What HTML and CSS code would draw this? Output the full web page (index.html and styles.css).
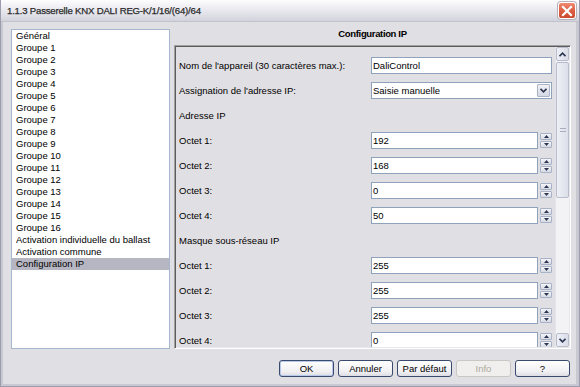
FILE: index.html
```html
<!DOCTYPE html>
<html lang="fr">
<head>
<meta charset="utf-8">
<title>Passerelle KNX DALI</title>
<link rel="stylesheet" href="styles.css">
</head>
<body>
<div class="window">
  <div class="titlebar">
    <span class="title">1.1.3 Passerelle KNX DALI REG-K/1/16/(64)/64</span>
    <span class="close"><svg width="12" height="12" viewBox="0 0 12 12"><path d="M2 2 L10 10 M10 2 L2 10" stroke="#fff" stroke-width="2.2" stroke-linecap="square"/></svg></span>
  </div>
  <div class="body">
    <div class="main">
      <ul class="tree">
        <li>Général</li>
        <li>Groupe 1</li>
        <li>Groupe 2</li>
        <li>Groupe 3</li>
        <li>Groupe 4</li>
        <li>Groupe 5</li>
        <li>Groupe 6</li>
        <li>Groupe 7</li>
        <li>Groupe 8</li>
        <li>Groupe 9</li>
        <li>Groupe 10</li>
        <li>Groupe 11</li>
        <li>Groupe 12</li>
        <li>Groupe 13</li>
        <li>Groupe 14</li>
        <li>Groupe 15</li>
        <li>Groupe 16</li>
        <li>Activation individuelle du ballast</li>
        <li>Activation commune</li>
        <li class="selected">Configuration IP</li>
      </ul>
      <div class="right">
        <div class="header">Configuration IP</div>
        <div class="panel">
          <div class="form">
            <div class="row"><span class="label">Nom de l'appareil (30 caractères max.):</span><span class="field">DaliControl</span></div>
            <div class="row"><span class="label">Assignation de l'adresse IP:</span><span class="field select"><span class="value">Saisie manuelle</span><span class="dropbtn"><svg width="7" height="5" viewBox="0 0 7 5"><path d="M0.5 0.8 L3.5 3.8 L6.5 0.8" fill="none" stroke="#2a3550" stroke-width="1.6"/></svg></span></span></div>
            <div class="row"><span class="label">Adresse IP</span></div>
            <div class="row"><span class="label">Octet 1:</span><span class="spin"><span class="field">192</span><span class="spinbtns"><span class="sb"><svg width="5" height="3" viewBox="0 0 5 3"><path d="M0 3 L2.5 0 L5 3Z" fill="#2a3550"/></svg></span><span class="sb"><svg width="5" height="3" viewBox="0 0 5 3"><path d="M0 0 L2.5 3 L5 0Z" fill="#2a3550"/></svg></span></span></span></div>
            <div class="row"><span class="label">Octet 2:</span><span class="spin"><span class="field">168</span><span class="spinbtns"><span class="sb"><svg width="5" height="3" viewBox="0 0 5 3"><path d="M0 3 L2.5 0 L5 3Z" fill="#2a3550"/></svg></span><span class="sb"><svg width="5" height="3" viewBox="0 0 5 3"><path d="M0 0 L2.5 3 L5 0Z" fill="#2a3550"/></svg></span></span></span></div>
            <div class="row"><span class="label">Octet 3:</span><span class="spin"><span class="field">0</span><span class="spinbtns"><span class="sb"><svg width="5" height="3" viewBox="0 0 5 3"><path d="M0 3 L2.5 0 L5 3Z" fill="#2a3550"/></svg></span><span class="sb"><svg width="5" height="3" viewBox="0 0 5 3"><path d="M0 0 L2.5 3 L5 0Z" fill="#2a3550"/></svg></span></span></span></div>
            <div class="row"><span class="label">Octet 4:</span><span class="spin"><span class="field">50</span><span class="spinbtns"><span class="sb"><svg width="5" height="3" viewBox="0 0 5 3"><path d="M0 3 L2.5 0 L5 3Z" fill="#2a3550"/></svg></span><span class="sb"><svg width="5" height="3" viewBox="0 0 5 3"><path d="M0 0 L2.5 3 L5 0Z" fill="#2a3550"/></svg></span></span></span></div>
            <div class="row"><span class="label">Masque sous-réseau IP</span></div>
            <div class="row"><span class="label">Octet 1:</span><span class="spin"><span class="field">255</span><span class="spinbtns"><span class="sb"><svg width="5" height="3" viewBox="0 0 5 3"><path d="M0 3 L2.5 0 L5 3Z" fill="#2a3550"/></svg></span><span class="sb"><svg width="5" height="3" viewBox="0 0 5 3"><path d="M0 0 L2.5 3 L5 0Z" fill="#2a3550"/></svg></span></span></span></div>
            <div class="row"><span class="label">Octet 2:</span><span class="spin"><span class="field">255</span><span class="spinbtns"><span class="sb"><svg width="5" height="3" viewBox="0 0 5 3"><path d="M0 3 L2.5 0 L5 3Z" fill="#2a3550"/></svg></span><span class="sb"><svg width="5" height="3" viewBox="0 0 5 3"><path d="M0 0 L2.5 3 L5 0Z" fill="#2a3550"/></svg></span></span></span></div>
            <div class="row"><span class="label">Octet 3:</span><span class="spin"><span class="field">255</span><span class="spinbtns"><span class="sb"><svg width="5" height="3" viewBox="0 0 5 3"><path d="M0 3 L2.5 0 L5 3Z" fill="#2a3550"/></svg></span><span class="sb"><svg width="5" height="3" viewBox="0 0 5 3"><path d="M0 0 L2.5 3 L5 0Z" fill="#2a3550"/></svg></span></span></span></div>
            <div class="row"><span class="label">Octet 4:</span><span class="spin"><span class="field">0</span><span class="spinbtns"><span class="sb"><svg width="5" height="3" viewBox="0 0 5 3"><path d="M0 3 L2.5 0 L5 3Z" fill="#2a3550"/></svg></span><span class="sb"><svg width="5" height="3" viewBox="0 0 5 3"><path d="M0 0 L2.5 3 L5 0Z" fill="#2a3550"/></svg></span></span></span></div>
          </div>
          <div class="scrollbar">
            <span class="sbtn"><svg width="7" height="5" viewBox="0 0 7 5"><path d="M0.5 4.2 L3.5 1.2 L6.5 4.2" fill="none" stroke="#2a3550" stroke-width="1.6"/></svg></span>
            <div class="track">
              <div class="thumb"><span class="grip"></span></div>
            </div>
            <span class="sbtn"><svg width="7" height="5" viewBox="0 0 7 5"><path d="M0.5 0.8 L3.5 3.8 L6.5 0.8" fill="none" stroke="#2a3550" stroke-width="1.6"/></svg></span>
          </div>
        </div>
      </div>
    </div>
    <div class="buttons">
      <span class="btn default">OK</span>
      <span class="btn">Annuler</span>
      <span class="btn">Par défaut</span>
      <span class="btn disabled">Info</span>
      <span class="btn">?</span>
    </div>
  </div>
</div>
</body>
</html>
```

FILE: styles.css
```css
* { box-sizing: border-box; }
html, body { margin: 0; padding: 0; }
body {
  width: 580px;
  height: 387px;
  overflow: hidden;
  font-family: "Liberation Sans", Arial, sans-serif;
  font-size: 9.5px;
  color: #000;
  background: #e0dfe3;
}
.window {
  width: 580px;
  height: 387px;
  display: flex;
  flex-direction: column;
  background: #e0dfe3;
  border: 1px solid #9c9cac;
  border-top: none;
}
.titlebar {
  height: 22px;
  flex: none;
  display: flex;
  align-items: center;
  justify-content: space-between;
  padding: 0 3px 0 6px;
  background: linear-gradient(#fdfdfe 0%, #eeeef3 35%, #dedee6 75%, #d2d2dc 100%);
  border-bottom: 1px solid #c2c2cc;
}
.title {
  font-size: 9.6px;
  color: #2b2b2b;
  letter-spacing: -0.2px;
  -webkit-text-stroke: 0.25px #2b2b2b;
}
.close {
  width: 18px;
  height: 17px;
  display: flex;
  align-items: center;
  justify-content: center;
  border: 1px solid #fff;
  border-radius: 3px;
  background: linear-gradient(#ee8a72, #dc5c40 55%, #c94a30);
  box-shadow: 0 0 0 1px #b8b0b8;
}
.body {
  flex: 1;
  display: flex;
  flex-direction: column;
  padding: 7px 5px 7px 8px;
  border-left: 2px solid #c8c8d2;
  border-right: 3px solid #c8c8d2;
  border-bottom: 2px solid #c8c8d2;
}
.main {
  height: 320px;
  display: flex;
  gap: 4px;
}
.tree {
  width: 159px;
  flex: none;
  margin: 0;
  padding: 0;
  list-style: none;
  background: #fff;
  border: 1px solid #a6b8d0;
}
.tree li {
  height: 12px;
  line-height: 12px;
  padding-left: 4px;
  white-space: nowrap;
}
.tree li.selected {
  background: #b6b6c2;
}
.right {
  flex: 1;
  display: flex;
  flex-direction: column;
}
.header {
  height: 16px;
  line-height: 10px;
  text-align: center;
  font-weight: bold;
  font-size: 9.5px;
  letter-spacing: -0.35px;
}
.panel {
  flex: 1;
  display: flex;
  border-top: 1px solid #a0a0a0;
  border-left: 1px solid #a0a0a0;
  border-right: 1px solid #fff;
  border-bottom: 1px solid #fff;
  box-shadow: inset 1px 1px 0 #5c5c5c, inset -1px -1px 0 #e8e8ec;
  padding: 1px;
  overflow: hidden;
}
.form {
  flex: 1;
  padding: 6px 3px 0 3px;
  overflow: hidden;
}
.row {
  height: 25px;
  display: flex;
  align-items: center;
}
.label {
  flex: 1;
  white-space: nowrap;
}
.field {
  width: 181px;
  height: 17px;
  flex: none;
  display: flex;
  align-items: center;
  padding-left: 1px;
  background: #fff;
  border: 1px solid #8ea2bb;
  white-space: nowrap;
}
.select {
  justify-content: space-between;
  padding-right: 1px;
}
.dropbtn {
  width: 13px;
  height: 13px;
  display: flex;
  align-items: center;
  justify-content: center;
  background: linear-gradient(#f2f2f6, #d4d8e4);
  border: 1px solid #aab4c8;
  border-radius: 1px;
}
.spin {
  width: 181px;
  flex: none;
  display: flex;
  align-items: center;
  gap: 2px;
}
.spin .field {
  width: 167px;
}
.spinbtns {
  width: 12px;
  height: 15px;
  display: flex;
  flex-direction: column;
  gap: 1px;
}
.sb {
  flex: 1;
  display: flex;
  align-items: center;
  justify-content: center;
  background: linear-gradient(#f6f6f9, #d6d9e3);
  border: 1px solid #a8b2c6;
  border-radius: 1px;
}
.scrollbar {
  width: 14px;
  flex: none;
  display: flex;
  flex-direction: column;
  background: #f3f3f6;
  border-left: 1px solid #e4e4ea;
}
.sbtn {
  height: 14px;
  flex: none;
  display: flex;
  align-items: center;
  justify-content: center;
  background: linear-gradient(90deg, #eef0f6, #dadde8);
  border: 1px solid #b8bccb;
  border-radius: 2px;
}
.track {
  flex: 1;
  padding-top: 1px;
}
.thumb {
  height: 136px;
  display: flex;
  align-items: center;
  justify-content: center;
  background: linear-gradient(90deg, #eef0f6, #dcdfe9);
  border: 1px solid #b8bccb;
  border-radius: 2px;
}
.grip {
  width: 6px;
  height: 4px;
  border-top: 1px solid #a8acbc;
  border-bottom: 1px solid #a8acbc;
}
.buttons {
  height: 28px;
  display: flex;
  justify-content: flex-end;
  align-items: flex-end;
  gap: 4px;
  padding-right: 1px;
}
.btn {
  width: 55px;
  height: 17px;
  display: flex;
  align-items: center;
  justify-content: center;
  background: linear-gradient(#ffffff, #f0f0f3 70%, #dcdce4);
  border: 1px solid #3a4a6c;
  border-radius: 3px;
}
.btn.default {
  box-shadow: inset 0 0 0 1px #b8c8ea;
}
.btn.disabled {
  color: #aca899;
  background: #f0efee;
  border-color: #c9c7c2;
}
```
